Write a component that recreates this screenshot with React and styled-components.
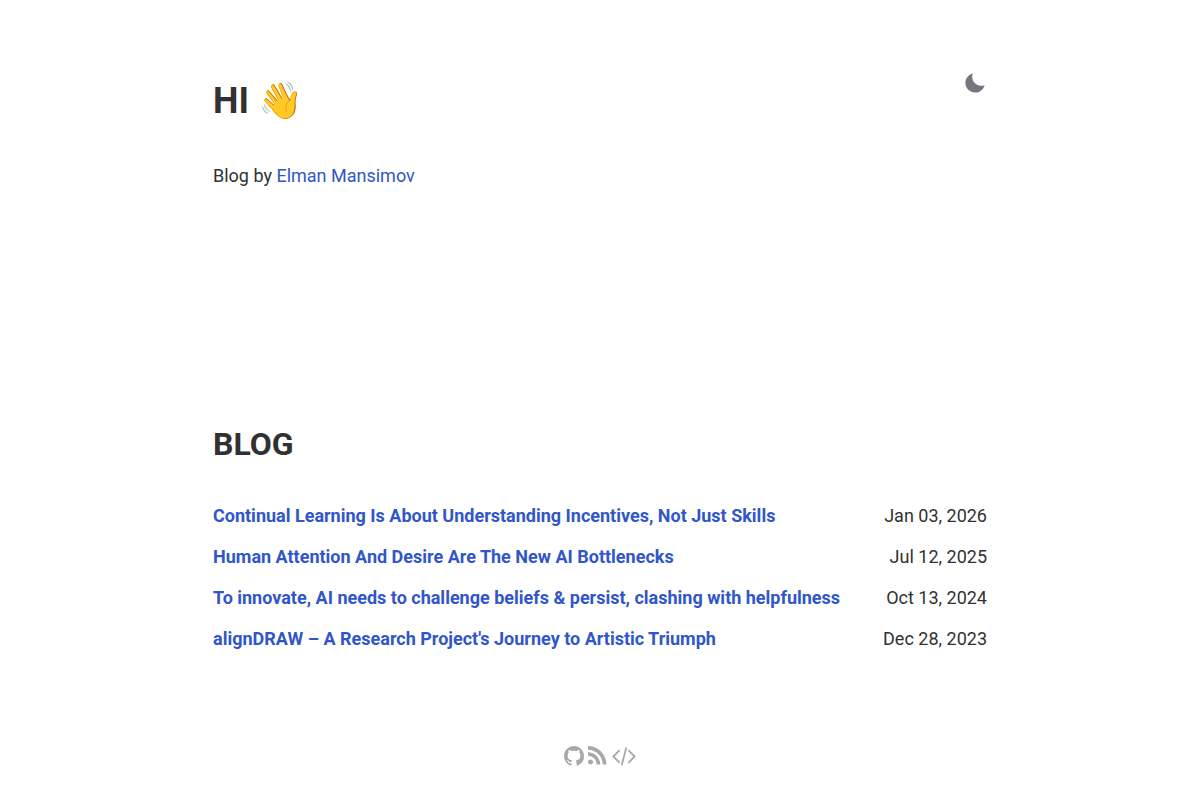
import React from "react";
import styled, { createGlobalStyle } from "styled-components";

const GlobalStyle = createGlobalStyle`
  *, *::before, *::after { box-sizing: border-box; }
  body {
    margin: 0;
    background: #ffffff;
    color: #313131;
    font-family: Roboto, "Noto Color Emoji", sans-serif;
    font-size: 18px;
    line-height: 27px;
  }
`;

const Page = styled.div`
  max-width: 810px;
  margin: 0 auto;
  padding: 71px 18px 32px;
`;

const Header = styled.header`
  display: flex;
  align-items: flex-start;
  justify-content: space-between;
`;

const Title = styled.h1`
  margin: 0;
  font-size: 36px;
  line-height: 60px;
  font-weight: 700;
  text-transform: uppercase;
`;

const ThemeButton = styled.button`
  display: flex;
  padding: 0;
  border: 0;
  background: none;
  color: #757780;
  cursor: pointer;
`;

const Intro = styled.p`
  margin: 31px 0 0;
`;

const Link = styled.a`
  color: #3056c9;
  text-decoration: none;
  font-weight: ${({ $strong }) => ($strong ? 700 : 400)};
`;

const Section = styled.section`
  margin-top: 231px;
`;

const SectionTitle = styled.h2`
  margin: 0 0 34px;
  font-size: 32px;
  line-height: 48px;
  font-weight: 700;
  text-transform: uppercase;
`;

const PostList = styled.ul`
  display: grid;
  gap: 14px;
  margin: 0;
  padding: 0;
  list-style: none;
`;

const Post = styled.li`
  display: flex;
  justify-content: space-between;
  gap: 18px;
`;

const PostDate = styled.time`
  flex: none;
`;

const Footer = styled.footer`
  display: flex;
  align-items: center;
  justify-content: center;
  gap: 4px;
  margin-top: 94px;
`;

const IconLink = styled.a`
  display: flex;
  color: #a8a8a8;
`;

const posts = [
  ["Continual Learning Is About Understanding Incentives, Not Just Skills", "Jan 03, 2026", "2026-01-03"],
  ["Human Attention And Desire Are The New AI Bottlenecks", "Jul 12, 2025", "2025-07-12"],
  ["To innovate, AI needs to challenge beliefs & persist, clashing with helpfulness", "Oct 13, 2024", "2024-10-13"],
  ["alignDRAW – A Research Project's Journey to Artistic Triumph", "Dec 28, 2023", "2023-12-28"],
];

const MoonIcon = () => (
  <svg width="24" height="24" viewBox="0 0 512 512" fill="currentColor" aria-hidden="true">
    <path d="M195 125c0-26.3 5.3-51.3 14.9-74.1C118.7 73 51 155.1 51 253c0 114.8 93.2 208 208 208 97.9 0 180-67.7 202.1-158.9-22.8 9.6-47.9 14.9-74.1 14.9-106 0-192-86-192-192z" />
  </svg>
);

const GithubIcon = () => (
  <svg width="20" height="20" viewBox="0 0 16 16" fill="currentColor" aria-hidden="true">
    <path d="M8 0C3.58 0 0 3.58 0 8c0 3.54 2.29 6.53 5.47 7.59.4.07.55-.17.55-.38 0-.19-.01-.82-.01-1.49-2.01.37-2.53-.49-2.69-.94-.09-.23-.48-.94-.82-1.13-.28-.15-.68-.52-.01-.53.63-.01 1.08.58 1.23.82.72 1.21 1.87.87 2.33.66.07-.52.28-.87.51-1.07-1.78-.2-3.64-.89-3.64-3.95 0-.87.31-1.59.82-2.15-.08-.2-.36-1.02.08-2.12 0 0 .67-.21 2.2.82.64-.18 1.32-.27 2-.27s1.36.09 2 .27c1.53-1.04 2.2-.82 2.2-.82.44 1.1.16 1.92.08 2.12.51.56.82 1.27.82 2.15 0 3.07-1.87 3.75-3.65 3.95.29.25.54.73.54 1.48 0 1.07-.01 1.93-.01 2.2 0 .21.15.46.55.38A8.01 8.01 0 0 0 16 8c0-4.42-3.58-8-8-8z" />
  </svg>
);

const RssIcon = () => (
  <svg width="20" height="20" viewBox="0 0 26 26" fill="currentColor" aria-hidden="true">
    <path d="M19.199 24C19.199 13.467 10.533 4.8 0 4.8V0c13.165 0 24 10.835 24 24h-4.801zM3.291 17.415c1.814 0 3.293 1.479 3.293 3.295 0 1.813-1.485 3.29-3.301 3.29C1.47 24 0 22.526 0 20.71s1.475-3.294 3.291-3.295zM15.909 24h-4.665c0-6.169-5.075-11.245-11.244-11.245V8.09c8.727 0 15.909 7.184 15.909 15.91z" />
  </svg>
);

const CodeIcon = () => (
  <svg width="24" height="20" viewBox="0 0 24 20" fill="none" stroke="currentColor" strokeWidth="1.8" aria-hidden="true">
    <path d="M7.6 4.2 1.4 10.5l6.2 6.3M16.4 4.2l6.2 6.3-6.2 6.3M14.3 1.6 9.7 19.2" />
  </svg>
);

export default function App() {
  return (
    <>
      <GlobalStyle />
      <Page>
        <Header>
          <Title>Hi 👋</Title>
          <ThemeButton type="button" aria-label="Toggle dark mode"><MoonIcon /></ThemeButton>
        </Header>
        <main>
          <Intro>Blog by <Link href="#about">Elman Mansimov</Link></Intro>
          <Section>
            <SectionTitle>Blog</SectionTitle>
            <PostList>
              {posts.map(([title, date, iso]) => (
                <Post key={iso}>
                  <Link $strong href={`#${iso}`}>{title}</Link>
                  <PostDate dateTime={iso}>{date}</PostDate>
                </Post>
              ))}
            </PostList>
          </Section>
        </main>
        <Footer>
          <IconLink href="#github" aria-label="GitHub"><GithubIcon /></IconLink>
          <IconLink href="#rss" aria-label="RSS feed"><RssIcon /></IconLink>
          <IconLink href="#source" aria-label="Source code"><CodeIcon /></IconLink>
        </Footer>
      </Page>
    </>
  );
}
